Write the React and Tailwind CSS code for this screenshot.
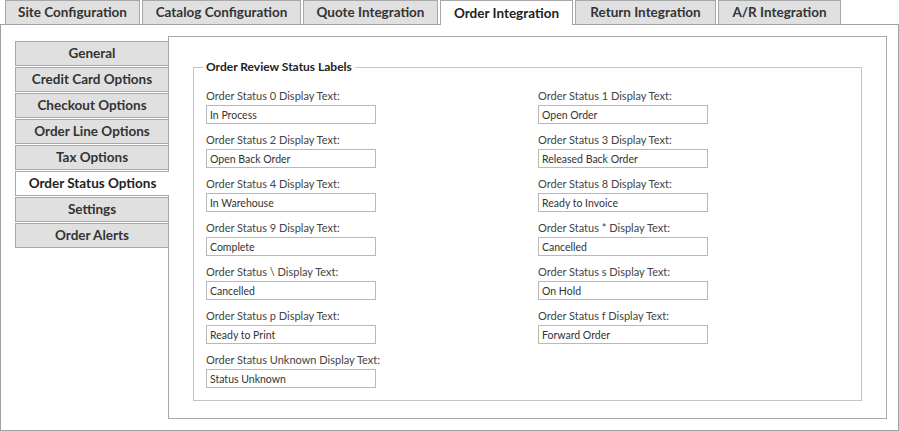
import React from 'react';

const tabs = [
  { label: 'Site Configuration', w: 'w-[135px]' },
  { label: 'Catalog Configuration', w: 'w-[159px]' },
  { label: 'Quote Integration', w: 'w-[135px]' },
  { label: 'Order Integration', w: 'w-[133px]', active: true },
  { label: 'Return Integration', w: 'w-[141px]' },
  { label: 'A/R Integration', w: 'w-[123px]' },
];

const sideItems = [
  'General',
  'Credit Card Options',
  'Checkout Options',
  'Order Line Options',
  'Tax Options',
  'Order Status Options',
  'Settings',
  'Order Alerts',
];

const fields = [
  ['0', 'In Process'],
  ['1', 'Open Order'],
  ['2', 'Open Back Order'],
  ['3', 'Released Back Order'],
  ['4', 'In Warehouse'],
  ['8', 'Ready to Invoice'],
  ['9', 'Complete'],
  ['*', 'Cancelled'],
  ['\\', 'Cancelled'],
  ['s', 'On Hold'],
  ['p', 'Ready to Print'],
  ['f', 'Forward Order'],
  ['Unknown', 'Status Unknown'],
];

export default function App() {
  return (
    <div className="w-[899px] h-[431px] bg-white text-[#333] font-['Lato','Liberation_Sans',sans-serif] overflow-hidden">
      {/* top tabs */}
      <div className="flex items-start gap-[2px] pl-[5px] h-[24px]">
        {tabs.map((t) =>
          t.active ? (
            <div
              key={t.label}
              className={`${t.w} h-[25px] relative z-10 bg-white border border-b-0 border-[#a8a8a8] flex items-center justify-center text-[13.5px] font-bold text-[#222]`}
            >
              {t.label}
            </div>
          ) : (
            <div
              key={t.label}
              className={`${t.w} h-[24px] bg-[#e0e0e0] border border-b-0 border-[#a8a8a8] flex items-center justify-center text-[13.5px] font-bold text-[#333]`}
            >
              {t.label}
            </div>
          )
        )}
      </div>

      {/* outer panel */}
      <div className="h-[407px] border border-[#a0a0a0] flex pl-[14px] pt-[11px]">
        {/* side menu */}
        <div className="relative z-10 w-[154px] mt-[5px] flex flex-col gap-[1px]">
          {sideItems.map((s) =>
            s === 'Order Status Options' ? (
              <div
                key={s}
                className="h-[25px] bg-white border border-r-0 border-[#a8a8a8] flex items-center justify-center text-[13.5px] font-bold text-[#222]"
              >
                {s}
              </div>
            ) : (
              <div
                key={s}
                className="h-[25px] bg-[#e0e0e0] border border-[#a8a8a8] flex items-center justify-center text-[13.5px] font-bold text-[#333]"
              >
                {s}
              </div>
            )
          )}
        </div>

        {/* content panel */}
        <div className="-ml-px w-[719px] h-[383px] border border-[#a8a8a8] pt-[23px] pl-[24px]">
          <fieldset className="w-[669px] border border-[#c4c4c4] pl-[12px] pb-[12px]">
            <legend className="-ml-[3px] px-[3px] text-[12px] leading-[14px] font-bold text-[#222]">
              Order Review Status Labels
            </legend>
            <div className="grid grid-cols-[332px_1fr] gap-y-[9px] mt-[15px]">
              {fields.map(([k, v]) => (
                <div key={k} className="flex flex-col">
                  <label className="text-[11px] leading-[13px] mb-[3px] text-[#444]">
                    Order Status {k} Display Text:
                  </label>
                  <input
                    readOnly
                    value={v}
                    className="w-[170px] h-[19px] border border-[#b8b8b8] px-[3px] text-[10.5px] text-[#333] outline-none"
                  />
                </div>
              ))}
            </div>
          </fieldset>
        </div>
      </div>
    </div>
  );
}
